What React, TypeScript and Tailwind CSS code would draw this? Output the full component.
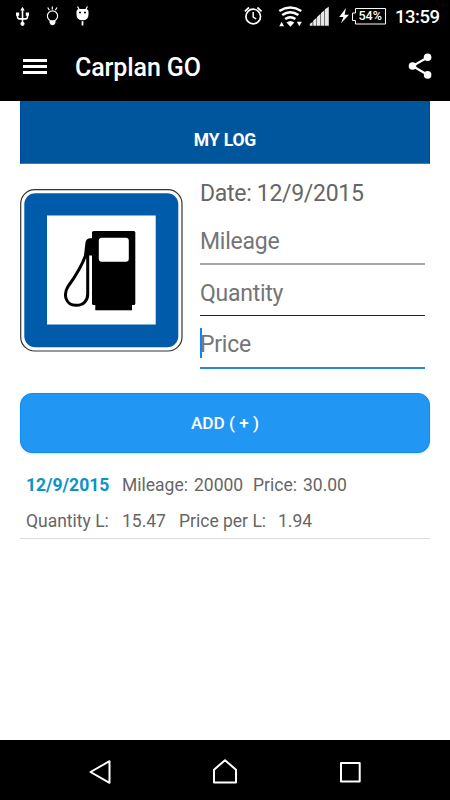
import React from 'react';

interface LogEntry {
  id: string;
  date: string;
  mileage: string;
  price: string;
  quantity: string;
  pricePerLitre: string;
}

const entries: LogEntry[] = [
  {
    id: '1',
    date: '12/9/2015',
    mileage: '20000',
    price: '30.00',
    quantity: '15.47',
    pricePerLitre: '1.94',
  },
];

function StatusBar() {
  return (
    <div className="flex h-[33px] items-center text-white">
      {/* notifications */}
      <svg className="h-[33px] w-[110px]" viewBox="0 0 110 33" fill="none" stroke="#fff">
        <g strokeWidth="1.6">
          <path d="M22.5 9v14M17.5 14.5v2.2q0 2 2 2.2h6q2 0 2-2.2v-2.2" />
          <path d="M22.5 6.8l2.2 3.6h-4.4z" fill="#fff" stroke="none" />
          <circle cx="22.5" cy="23.8" r="2.1" fill="#fff" stroke="none" />
          <path d="M16 12.5h3.2v3.2H16zM25.8 12.5H29v3.2h-3.2z" fill="#fff" stroke="none" />
        </g>
        <circle cx="52.5" cy="16" r="5.1" strokeWidth="1.2" />
        <path d="M52.3 6.5v3M47.7 7.5l1.7 2.7M57 7.5l-1.7 2.7" strokeWidth="1.2" />
        <path d="M49.5 20.5h6v2.2q-1 2.5-3 2.5t-3-2.5z" fill="#fff" stroke="none" />
        <path d="M76.5 12q0-3 3-3h6q3 0 3 3v2.5q0 5.8-6 5.8t-6-5.8z" fill="#fff" stroke="none" />
        <path d="M77.5 6.5l2 3.5M87.5 6.5l-2 3.5" strokeWidth="1.2" />
        <path d="M82.5 21.2v4.3" strokeWidth="1.8" />
        <path d="M79 12.5h2M84 12.5h2" stroke="#000" strokeWidth="1.4" />
      </svg>
      {/* system */}
      <svg className="ml-[130px] h-[33px] w-[112px]" viewBox="240 0 112 33" fill="none" stroke="#fff">
        <circle cx="253.2" cy="16.5" r="7.3" strokeWidth="1.7" />
        <path d="M253.2 12v5l3 2" strokeWidth="1.5" />
        <path d="M244.8 11.3l4.2-3.8M261.6 11.3l-4.2-3.8" strokeWidth="1.7" />
        <g strokeWidth="2.5">
          <path d="M279.3 11q11-7 22 0" />
          <path d="M282.2 15q8.1-5.6 16.2 0" />
          <path d="M285.2 19q5.1-3.6 10.2 0" />
        </g>
        <path d="M286.5 22.6q3.9-3 7.8 0l-3.9 4.2z" fill="#fff" stroke="none" />
        <path d="M279.2 26.3l2.5-4.6 2.3 4.6zM296.8 21.7h5l-2.5 4.6z" fill="#fff" stroke="none" />
        <path
          d="M309.8 25.8v-1.8l2.8-2.2v4zM313.2 25.8v-5l3.3-3v8zM317 25.8v-8.8l3.5-3.2v12zM321 25.8v-12.8l3.4-2.7v15.5zM324.9 25.8v-16.5l3.9-2.5v19z"
          fill="#e8e8e8"
          stroke="none"
        />
        <path d="M346 8l-6.8 9h4.2l-2.4 6.3 8-8.6h-4.4z" fill="#fff" stroke="none" />
      </svg>
      <div className="relative h-[17px] w-[34px]">
        <svg className="absolute inset-0" width="34" height="17" viewBox="0 0 34 17" fill="none" stroke="#fff">
          <path d="M3.5.5h30v15.500h-30v-3.500H.5v-7.500h3z" />
        </svg>
        <span className="absolute top-0 left-[6.5px] text-[12.5px] leading-[15px] font-medium">54%</span>
      </div>
      <span className="ml-[9px] pt-px text-[18.5px] leading-[33px] font-medium tracking-[-0.5px]">13:59</span>
    </div>
  );
}

function AppBar() {
  return (
    <header className="flex h-[68px] items-center text-white">
      <div className="mb-[1px] ml-[23px] flex w-6 flex-col gap-[3.5px]">
        <span className="h-[2.8px] bg-white" />
        <span className="h-[2.8px] bg-white" />
        <span className="h-[2.8px] bg-white" />
      </div>
      <h1 className="ml-7 pt-[2px] text-[25px] font-medium tracking-[-0.1px]">Carplan GO</h1>
      <svg className="mr-[17px] mb-[2px] ml-auto" width="25" height="28" viewBox="0 0 25 28">
        <path d="M19.5 5.5L4.5 14l15 8.7" fill="none" stroke="#fff" strokeWidth="2.2" />
        <circle cx="19.6" cy="5.3" r="3.8" fill="#fff" />
        <circle cx="4.5" cy="14" r="3.8" fill="#fff" />
        <circle cx="19.6" cy="22.9" r="3.8" fill="#fff" />
      </svg>
    </header>
  );
}

function FuelSign() {
  return (
    <svg width="163" height="163" viewBox="0 0 163 163">
      <rect x="0.7" y="0.7" width="161.3" height="161.3" rx="14" fill="#fff" stroke="#333" strokeWidth="1.2" />
      <rect x="4.3" y="4.2" width="154" height="154" rx="11" fill="#005cab" />
      <rect x="27" y="26.5" width="108.7" height="109" fill="#fff" />
      <rect x="72" y="42" width="43.3" height="74" rx="1.5" />
      <rect x="75.3" y="115" width="36.7" height="6.3" />
      <rect x="78.8" y="48.8" width="30" height="24" rx="3" fill="#fff" />
      <path d="M73 49.3h-3.5q-3.2.5-4 4L64 66.5h8V66h1z" />
      <path
        d="M66.5 64C62 77 55 88 48 97.5C43.3 105 45 116 56 116.3C64 116.5 67.7 111 67.7 105V64"
        fill="none"
        stroke="#000"
        strokeWidth="3"
      />
    </svg>
  );
}

function LogForm() {
  return (
    <div className="ml-[17px] flex w-[225px] flex-col text-[23px] tracking-[-0.25px] text-[#666]">
      <div className="h-[26px] leading-[27px] tracking-[-0.3px]">
        <span>Date: 12/9/2015</span>
      </div>
      <div className="mt-[22px] h-[37px] border-b-2 border-[#a6a6a6] leading-[27px] text-[#757575]">
        <span>Mileage</span>
      </div>
      <div className="mt-[15px] h-[36px] border-b border-[#222] leading-[27px] text-[#757575]">
        <span>Quantity</span>
      </div>
      <div className="relative mt-[15px] h-[38px] border-b-2 border-[#2d87d0] leading-[27px] text-[#757575]">
        <span>Price</span>
        <span className="absolute top-[-3px] left-0 h-[30px] w-[2px] bg-[#0a84ff]" />
      </div>
    </div>
  );
}

function LogRow({ entry }: { entry: LogEntry }) {
  return (
    <li className="h-[77px] border-b border-[#ddd] pt-[5px] pl-[6px] text-[17.5px] leading-[36px] text-[#666]">
      <div className="flex h-[36px]">
        <span className="w-[96px] font-bold text-[#0a93c9]">{entry.date}</span>
        <span className="w-[72px]">Mileage:</span>
        <span className="w-[59px]">{entry.mileage}</span>
        <span className="w-[50px]">Price:</span>
        <span>{entry.price}</span>
      </div>
      <div className="flex h-[36px]">
        <span className="w-[96px]">Quantity L:</span>
        <span className="w-[57px]">{entry.quantity}</span>
        <span className="w-[99px]">Price per L:</span>
        <span>{entry.pricePerLitre}</span>
      </div>
    </li>
  );
}

function NavBar() {
  return (
    <nav className="flex h-[60px] items-center justify-center bg-black">
      <svg width="450" height="60" viewBox="0 0 450 60" fill="none" stroke="#fff" strokeWidth="2" strokeLinejoin="round">
        <path d="M90.5 32l19-10.8v21.6z" />
        <path d="M214 42.5v-12.8l11-9.5 11 9.5v12.8z" />
        <path d="M341 23h18.7v18.5H341z" />
      </svg>
    </nav>
  );
}

export default function App() {
  return (
    <div className="flex h-[800px] w-[450px] flex-col overflow-hidden bg-white font-[Roboto,sans-serif]">
      <div className="h-[101px] bg-black">
        <StatusBar />
        <AppBar />
      </div>
      <main className="flex-1 px-5">
        <h2 className="h-[63px] border-x border-b border-x-[#0045a0] border-b-[#3d7fb5] bg-[#00569c] pt-[27px] text-center text-[17.5px] leading-[24px] font-bold tracking-[-0.15px] text-white">
          MY LOG
        </h2>
        <section className="flex h-[229px]">
          <div className="pt-[25px]">
            <FuelSign />
          </div>
          <div className="pt-[16px]">
            <LogForm />
          </div>
        </section>
        <button className="block h-[60px] w-full rounded-[12px] border border-[#0c8cf4] bg-[#2196f3] pt-[2px] text-[17.2px] font-medium text-white shadow-sm">
          ADD ( + )
        </button>
        <ul className="pt-[9px]">
          {entries.map((entry) => (
            <LogRow key={entry.id} entry={entry} />
          ))}
        </ul>
      </main>
      <NavBar />
    </div>
  );
}
